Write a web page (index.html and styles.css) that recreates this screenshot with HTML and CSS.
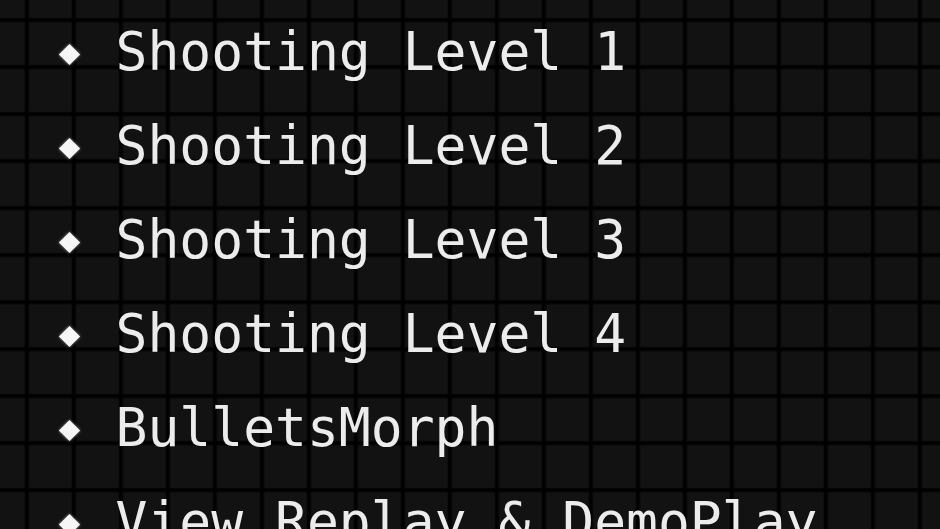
FILE: index.html
```html
<!DOCTYPE html>
<html lang="en">
<head>
<meta charset="utf-8">
<title>Menu</title>
<link rel="stylesheet" href="styles.css">
</head>
<body>
<ul class="menu">
  <li class="item">Shooting Level 1</li>
  <li class="item">Shooting Level 2</li>
  <li class="item">Shooting Level 3</li>
  <li class="item">Shooting Level 4</li>
  <li class="item">BulletsMorph</li>
  <li class="item">View Replay &amp; DemoPlay</li>
</ul>
</body>
</html>
```
FILE: styles.css
```css
html, body {
  margin: 0;
  height: 100%;
  overflow: hidden;
}
body {
  background-color: #121212;
  background-image:
    linear-gradient(to right, rgba(0,0,0,0.4) 0, #000 1.5px, #000 3px, rgba(0,0,0,0.4) 4.5px, transparent 4.5px),
    linear-gradient(to bottom, rgba(0,0,0,0.4) 0, #000 1.5px, #000 3px, rgba(0,0,0,0.4) 4.5px, transparent 4.5px);
  background-size: 47px 47px, 47px 47px;
  background-position: 24.5px 0, 0 17.8px;
  font-family: "DejaVu Sans Mono", "Liberation Mono", monospace;
  color: #ececec;
}
.menu {
  list-style: none;
  margin: 0;
  padding: 4.5px 0 0 0;
}
.item {
  display: flex;
  align-items: center;
  height: 94px;
  font-size: 53px;
  line-height: 94px;
  white-space: nowrap;
  padding-left: 62px;
  gap: 38.5px;
}
.item::before {
  content: "";
  width: 15px;
  height: 15px;
  background: #f6f6f6;
  transform: rotate(45deg);
  flex: none;
  margin-top: 5px;
  box-shadow: 0 0 3px rgba(255,255,255,0.55);
}
```
